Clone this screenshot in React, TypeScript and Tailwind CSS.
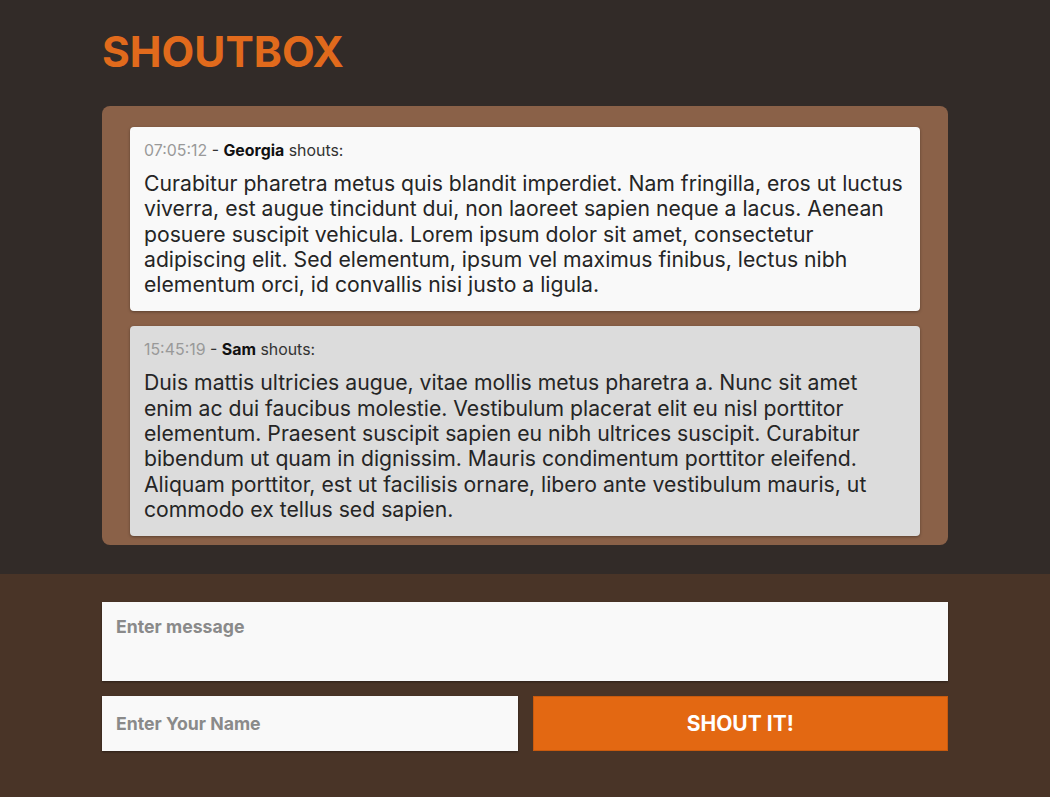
import { useState } from 'react'

interface Shout {
  time: string
  name: string
  text: string
}

const shouts: Shout[] = [
  {
    time: '07:05:12',
    name: 'Georgia',
    text: 'Curabitur pharetra metus quis blandit imperdiet. Nam fringilla, eros ut luctus viverra, est augue tincidunt dui, non laoreet sapien neque a lacus. Aenean posuere suscipit vehicula. Lorem ipsum dolor sit amet, consectetur adipiscing elit. Sed elementum, ipsum vel maximus finibus, lectus nibh elementum orci, id convallis nisi justo a ligula.',
  },
  {
    time: '15:45:19',
    name: 'Sam',
    text: 'Duis mattis ultricies augue, vitae mollis metus pharetra a. Nunc sit amet enim ac dui faucibus molestie. Vestibulum placerat elit eu nisl porttitor elementum. Praesent suscipit sapien eu nibh ultrices suscipit. Curabitur bibendum ut quam in dignissim. Mauris condimentum porttitor eleifend. Aliquam porttitor, est ut facilisis ornare, libero ante vestibulum mauris, ut commodo ex tellus sed sapien.',
  },
]

export default function App() {
  const [message, setMessage] = useState('')
  const [name, setName] = useState('')

  return (
    <div className="min-h-screen flex flex-col font-['Inter',sans-serif]">
      <div className="bg-[#322b28] pt-[25px] pb-[29px]">
        <div className="w-[846px] mx-auto">
          <h1 className="text-[42.5px] leading-[53px] font-bold text-[#e16a1c] mb-[28px]">SHOUTBOX</h1>
          <div className="bg-[#8a6148] rounded-lg px-[28px] pt-[21px] pb-[9px] flex flex-col gap-[15px]">
            {shouts.map((s, i) => (
              <div
                key={s.time}
                className={
                  'rounded px-[14px] pt-[14px] pb-[14px] shadow-[0_1px_3px_rgba(0,0,0,0.35)] ' +
                  (i % 2 === 0 ? 'bg-[#f9f9f9]' : 'bg-[#dcdcdc]')
                }
              >
                <div className="text-[15.9px] leading-[20px] text-[#333]">
                  <span className="text-[#999]">{s.time}</span> - <span className="font-bold text-[#111]">{s.name}</span> shouts:
                </div>
                <p className="mt-[10px] text-[21.2px] leading-[25.3px] text-[#252525]">{s.text}</p>
              </div>
            ))}
          </div>
        </div>
      </div>
      <div className="flex-1 bg-[#493427] pt-[28px] pb-[46px]">
        <div className="w-[846px] mx-auto flex flex-col gap-[15px]">
          <textarea
            value={message}
            onChange={(e) => setMessage(e.target.value)}
            placeholder="Enter message"
            className="h-[79px] resize-none bg-[#f9f9f9] px-[14px] py-[15px] text-[17.7px] leading-[20px] font-bold text-[#333] placeholder:text-[#8a8a8a] outline-none shadow-[0_1px_2px_rgba(0,0,0,0.4)]"
          />
          <div className="grid grid-cols-2 gap-[15px]">
            <input
              value={name}
              onChange={(e) => setName(e.target.value)}
              placeholder="Enter Your Name"
              className="min-w-0 h-[55px] bg-[#f9f9f9] px-[14px] text-[17.7px] font-bold text-[#333] placeholder:text-[#8a8a8a] outline-none shadow-[0_1px_2px_rgba(0,0,0,0.4)]"
            />
            <button className="h-[55px] bg-[#e36812] border border-[#c85a0e] text-white text-[21px] font-bold">
              SHOUT IT!
            </button>
          </div>
        </div>
      </div>
    </div>
  )
}
